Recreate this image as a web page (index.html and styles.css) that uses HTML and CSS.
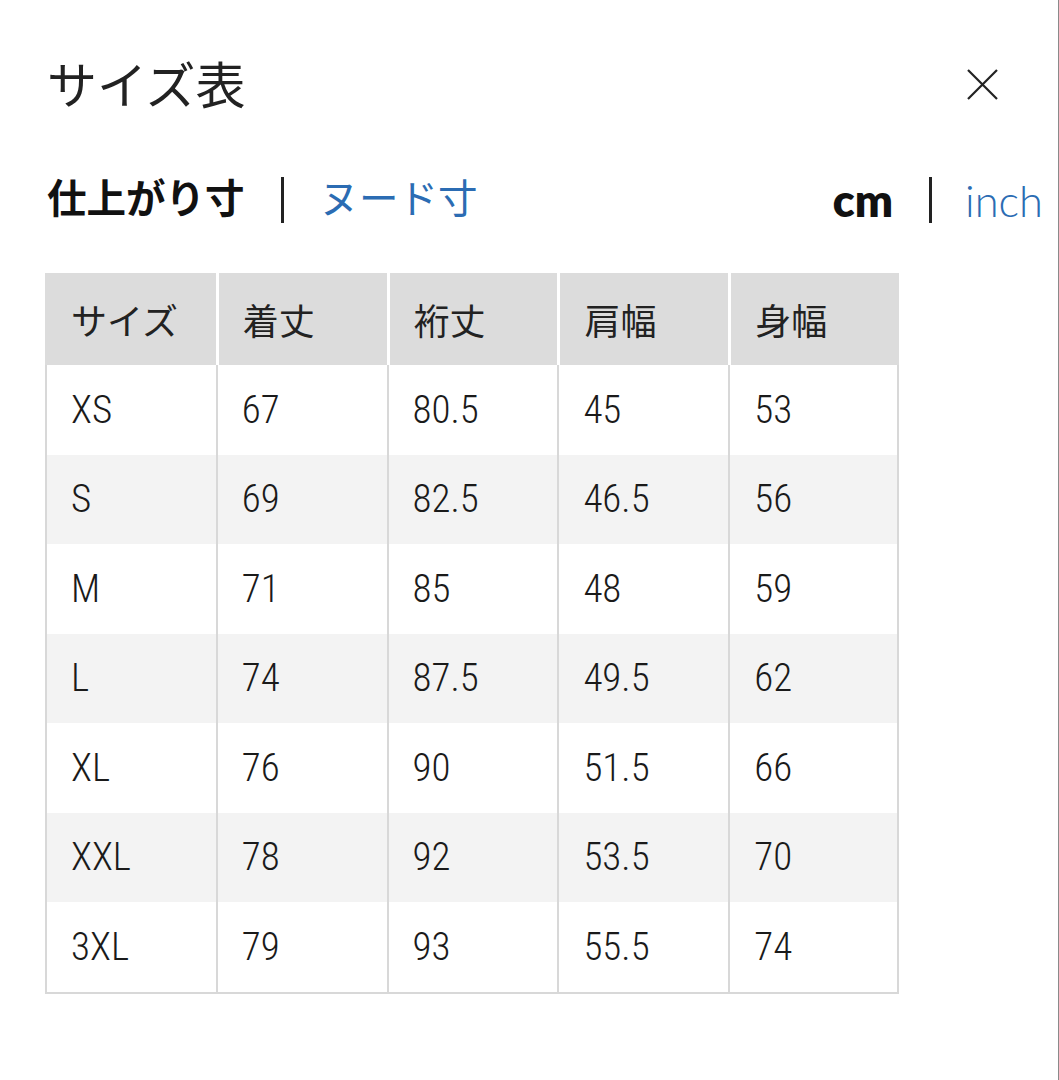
FILE: index.html
```html
<!DOCTYPE html>
<html lang="ja">
<head>
<meta charset="utf-8">
<title>サイズ表</title>
<link rel="stylesheet" href="styles.css">
</head>
<body>
<div class="sheet">
  <header class="head">
    <h1 class="title">サイズ表</h1>
    <button class="close" aria-label="閉じる">
      <svg width="31" height="31" viewBox="0 0 31 31"><path d="M1 1L30 30M30 1L1 30" stroke="#222" stroke-width="2.2" fill="none"/></svg>
    </button>
  </header>
  <div class="toggles">
    <div class="group jp"><span class="on">仕上がり寸</span><span class="sep"></span><span class="off">ヌード寸</span></div>
    <div class="group unit"><span class="on">cm</span><span class="sep"></span><span class="off">inch</span></div>
  </div>
  <table class="size">
    <thead>
      <tr><th>サイズ</th><th>着丈</th><th>裄丈</th><th>肩幅</th><th>身幅</th></tr>
    </thead>
    <tbody>
      <tr><td>XS</td><td>67</td><td>80.5</td><td>45</td><td>53</td></tr>
      <tr><td>S</td><td>69</td><td>82.5</td><td>46.5</td><td>56</td></tr>
      <tr><td>M</td><td>71</td><td>85</td><td>48</td><td>59</td></tr>
      <tr><td>L</td><td>74</td><td>87.5</td><td>49.5</td><td>62</td></tr>
      <tr><td>XL</td><td>76</td><td>90</td><td>51.5</td><td>66</td></tr>
      <tr><td>XXL</td><td>78</td><td>92</td><td>53.5</td><td>70</td></tr>
      <tr><td>3XL</td><td>79</td><td>93</td><td>55.5</td><td>74</td></tr>
    </tbody>
  </table>
</div>
</body>
</html>
```
FILE: styles.css
```css
html, body {
  margin: 0;
  background: #fff;
}

.sheet {
  width: 1058px;
  min-height: 1080px;
  border-right: 1px solid #8a8a8a;
  font-family: "Noto Sans CJK JP", sans-serif;
  color: #222;
}

.head {
  display: flex;
  justify-content: space-between;
  align-items: flex-start;
  height: 50px;
  padding: 57px 60px 0 47px;
}

.title {
  margin: 0;
  font-size: 50px;
  font-weight: 400;
  line-height: 50px;
  color: #222;
}

.close {
  display: block;
  width: 31px;
  height: 31px;
  margin-top: 12px;
  padding: 0;
  border: 0;
  background: none;
}

.close svg {
  display: block;
}

.toggles {
  display: flex;
  justify-content: space-between;
  align-items: center;
  height: 46px;
  margin-top: 70px;
  padding: 0 15px 0 47px;
}

.group {
  display: flex;
  align-items: center;
}

.sep {
  width: 3px;
  height: 46px;
  background: #222;
  margin: 0 36px;
}

.jp span.on,
.jp span.off {
  font-size: 39.5px;
  line-height: 46px;
  margin-bottom: 9px;
}

.jp .on {
  font-weight: 700;
  color: #111;
}

.off {
  color: #2b6cb3;
}

.unit .on {
  font-family: Lato, "Liberation Sans", sans-serif;
  font-weight: 800;
  font-size: 45px;
  line-height: 46px;
  color: #111;
}

.unit .off {
  font-family: Lato, "Liberation Sans", sans-serif;
  font-weight: 300;
  font-size: 43.5px;
  line-height: 46px;
}

.unit .sep {
  margin: 0 33px 0 36px;
}

.size {
  margin: 50px 0 0 45px;
  width: 854px;
  border-collapse: separate;
  border-spacing: 0;
  table-layout: fixed;
  font-family: "Roboto Condensed", "Liberation Sans Narrow", "DejaVu Sans Condensed", "Noto Sans CJK JP", sans-serif;
}

.size th {
  height: 92px;
  padding: 0 0 0 24px;
  background: #dcdcdc;
  border-left: 3px solid #fff;
  font-family: "Noto Sans CJK JP", sans-serif;
  font-size: 36px;
  font-weight: 400;
  text-align: left;
  color: #222;
}

.size th:first-child {
  border-left: 2px solid transparent;
}

.size th:last-child {
  border-right: 2px solid transparent;
}

.size td {
  height: 89.5px;
  padding: 0 0 0 24px;
  border-left: 2px solid #d8d8d8;
  font-size: 39px;
  font-weight: 300;
  color: #1a1a1a;
}

.size td:last-child {
  border-right: 2px solid #d8d8d8;
}

.size tbody tr:nth-child(even) td {
  background: #f3f3f3;
}

.size tbody tr:last-child td {
  border-bottom: 2px solid #d8d8d8;
}
```
